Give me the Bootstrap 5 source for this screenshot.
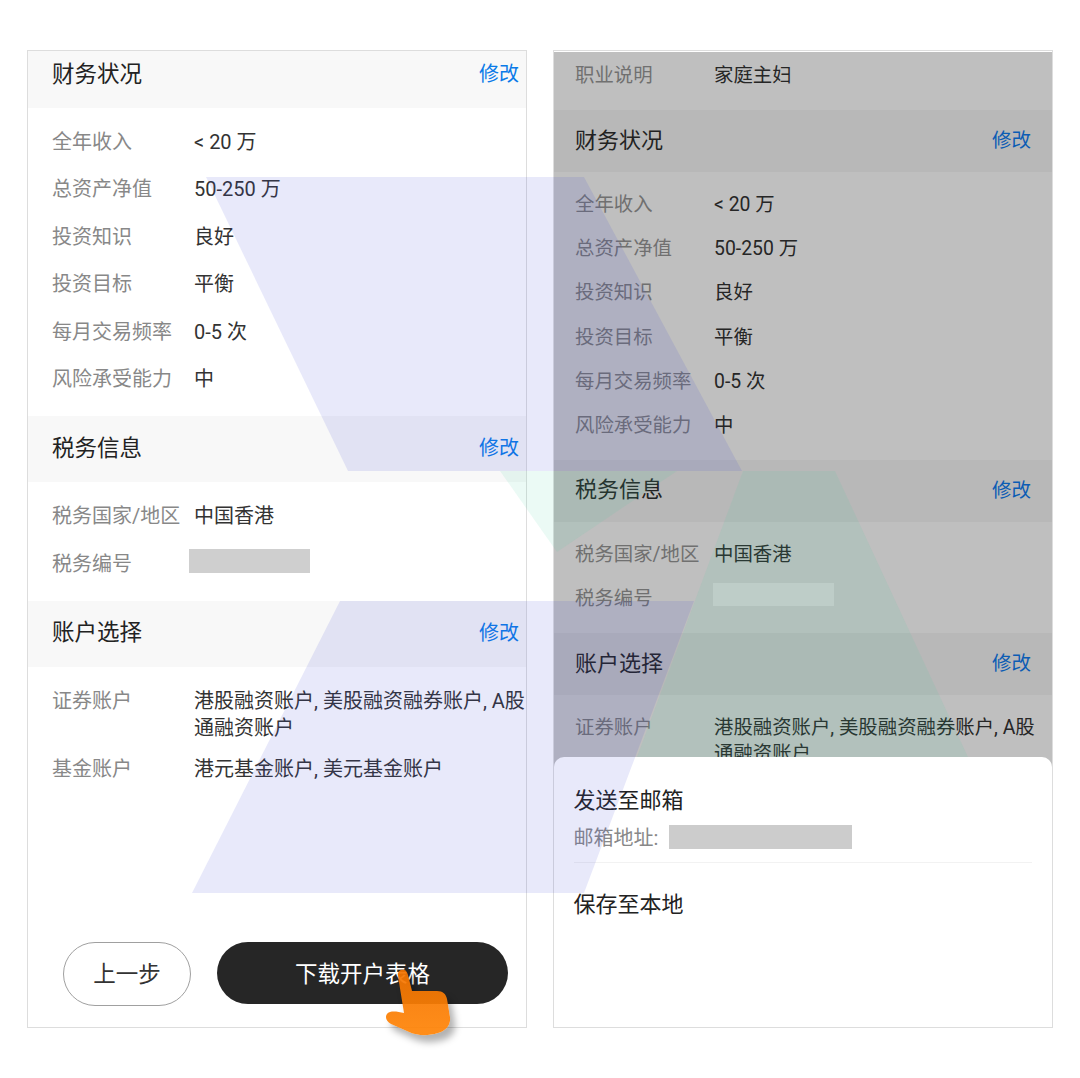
<!DOCTYPE html>
<html lang="zh">
<head>
<meta charset="utf-8">
<title>开户表格</title>
<link href="https://cdn.jsdelivr.net/npm/bootstrap@5.3.0/dist/css/bootstrap.min.css" rel="stylesheet">
<style>
html,body{height:1078px;overflow:hidden;background:#fff}
body{font-family:Roboto,"Noto Sans CJK SC",sans-serif;color:#333;position:relative}
.stage{padding:50px 0 0 27px;gap:26px}
.phone{width:500px;height:978px;border:1px solid #ddd;background:#fff;position:relative;overflow:hidden}
.sec-head{height:66px;padding:0 7px 2px 24px;background:#f8f8f8;font-size:22.5px;color:#222}
.sec-head.clipped{height:57px;padding-bottom:11px}
.sec-head.clipped span{padding-top:2px}
.sec-head a{font-size:20px;color:#0a7be8;text-decoration:none}
.info{padding:20.5px 0 23px 24px;gap:20.6px;font-size:20px;line-height:27px}
.info.tight{padding-top:21.5px;gap:13.5px}
.lab{width:142px;flex:none;color:#888}
.val{color:#333;white-space:nowrap}
.mask-l{width:121px;height:24px;margin:-2px 0 0 -5px;background:#cfcfcf}
.foot{padding:0 0 21px 35px;gap:26px}
.btn.back{width:128px;height:64px;border:1px solid #a0a0a0;color:#333;font-size:22.5px;background:#fff;padding:2px 0 0}
.btn.dl{width:291px;height:62px;border:0;background:#262626;color:#fff;font-size:22.5px;padding:3px 0 0}
.dim{background:#bfbfbf;height:720px;margin-top:1px;overflow:hidden;font-size:19.4px}
.dim .sec-head{height:62px;padding:0 21px 2px 21px;background:#b8b8b8;font-size:22px}
.dim .sec-head a{font-size:19.5px;color:#0c5cb4;padding-top:1px}
.dim .info{padding:20px 0 21px 21px;gap:18.2px;font-size:19.4px;line-height:26px}
.dim .lab{width:139px;color:#707070}
.dim .val{color:#262626}
.top-row{height:58px;padding:11px 0 0 21px;line-height:26px}
.mask-r{width:121px;height:23px;margin:-3px 0 0 -1.5px;background:#cdcdcd}
.sheet{position:absolute;left:0;right:0;bottom:0;height:270px;background:#fff;border-radius:10px 10px 0 0;padding:28px 20px 0 19.5px}
.sheet-title{font-size:22px;line-height:32px;color:#222}
.sheet-sub{font-size:20px;line-height:26px;color:#888;margin-top:8px;padding-bottom:11px;border-bottom:1px solid #f2f2f2}
.mask-m{width:183px;height:24px;background:#ccc;margin-left:11px}
.sheet-save{margin-top:26px}
.deco,.hand{position:absolute;left:0;top:0;pointer-events:none}
</style>
</head>
<body>
<div class="stage d-flex">
  <div class="phone d-flex flex-column">
    <div class="sec-head clipped d-flex justify-content-between align-items-center"><span>财务状况</span><a href="#">修改</a></div>
    <div class="info d-flex flex-column">
      <div class="d-flex"><span class="lab">全年收入</span><span class="val">&lt; 20 万</span></div>
      <div class="d-flex"><span class="lab">总资产净值</span><span class="val">50-250 万</span></div>
      <div class="d-flex"><span class="lab">投资知识</span><span class="val">良好</span></div>
      <div class="d-flex"><span class="lab">投资目标</span><span class="val">平衡</span></div>
      <div class="d-flex"><span class="lab">每月交易频率</span><span class="val">0-5 次</span></div>
      <div class="d-flex"><span class="lab">风险承受能力</span><span class="val">中</span></div>
    </div>
    <div class="sec-head d-flex justify-content-between align-items-center"><span>税务信息</span><a href="#">修改</a></div>
    <div class="info d-flex flex-column">
      <div class="d-flex"><span class="lab">税务国家/地区</span><span class="val">中国香港</span></div>
      <div class="d-flex"><span class="lab">税务编号</span><span class="mask-l"></span></div>
    </div>
    <div class="sec-head d-flex justify-content-between align-items-center"><span>账户选择</span><a href="#">修改</a></div>
    <div class="info tight d-flex flex-column">
      <div class="d-flex"><span class="lab">证券账户</span><span class="val">港股融资账户, 美股融资融券账户, A股<br>通融资账户</span></div>
      <div class="d-flex"><span class="lab">基金账户</span><span class="val">港元基金账户, 美元基金账户</span></div>
    </div>
    <div class="foot d-flex align-items-start mt-auto">
      <button type="button" class="btn back rounded-pill">上一步</button>
      <button type="button" class="btn dl rounded-pill">下载开户表格</button>
    </div>
  </div>
  <div class="phone">
    <div class="dim">
      <div class="top-row d-flex"><span class="lab">职业说明</span><span class="val">家庭主妇</span></div>
      <div class="sec-head d-flex justify-content-between align-items-center"><span>财务状况</span><a href="#">修改</a></div>
      <div class="info d-flex flex-column">
        <div class="d-flex"><span class="lab">全年收入</span><span class="val">&lt; 20 万</span></div>
        <div class="d-flex"><span class="lab">总资产净值</span><span class="val">50-250 万</span></div>
        <div class="d-flex"><span class="lab">投资知识</span><span class="val">良好</span></div>
        <div class="d-flex"><span class="lab">投资目标</span><span class="val">平衡</span></div>
        <div class="d-flex"><span class="lab">每月交易频率</span><span class="val">0-5 次</span></div>
        <div class="d-flex"><span class="lab">风险承受能力</span><span class="val">中</span></div>
      </div>
      <div class="sec-head d-flex justify-content-between align-items-center"><span>税务信息</span><a href="#">修改</a></div>
      <div class="info d-flex flex-column">
        <div class="d-flex"><span class="lab">税务国家/地区</span><span class="val">中国香港</span></div>
        <div class="d-flex"><span class="lab">税务编号</span><span class="mask-r"></span></div>
      </div>
      <div class="sec-head d-flex justify-content-between align-items-center"><span>账户选择</span><a href="#">修改</a></div>
      <div class="info d-flex flex-column">
        <div class="d-flex"><span class="lab">证券账户</span><span class="val">港股融资账户, 美股融资融券账户, A股<br>通融资账户</span></div>
      </div>
    </div>
    <div class="sheet">
      <div class="sheet-title">发送至邮箱</div>
      <div class="sheet-sub d-flex"><span>邮箱地址:</span><span class="mask-m"></span></div>
      <div class="sheet-title sheet-save">保存至本地</div>
    </div>
  </div>
</div>
<svg class="deco" width="1080" height="1078" viewBox="0 0 1080 1078" aria-hidden="true">
  <polygon fill="#46d2a0" fill-opacity=".11" points="500,471 557,552 677,471"/>
  <polygon fill="#46d2a0" fill-opacity=".11" points="743,471 835,471 968,757 637,757"/>
  <polygon fill="#3f46d7" fill-opacity=".12" points="206,177 584,177 742,471 348,471"/>
  <polygon fill="#3f46d7" fill-opacity=".12" points="340,601 694,601 584,893 192,893"/>
</svg>
<svg class="hand" width="1080" height="1078" viewBox="0 0 1080 1078" aria-hidden="true">
  <defs>
    <linearGradient id="hg" x1="0" y1="0" x2="0" y2="1"><stop offset="0" stop-color="#f47400"/><stop offset="1" stop-color="#ff8508"/></linearGradient>
    <filter id="hs" x="-30%" y="-30%" width="170%" height="170%"><feGaussianBlur stdDeviation="3.5"/></filter>
    <path id="hp" d="M398 976C397 971 401 969 404 970C406 970 407 972 408 975L412 991H437C443 991 446 994 447 999L450 1017C451 1025 446 1031 438 1033C428 1036 418 1036 409 1032L391 1024C385 1021 384 1014 390 1012C394 1011 399 1012 404 1013Z"/>
    <mask id="hm" maskUnits="userSpaceOnUse" x="0" y="0" width="1080" height="1078"><rect width="1080" height="1078" fill="#fff"/><use href="#hp" fill="#000"/></mask>
  </defs>
  <g mask="url(#hm)"><use href="#hp" transform="translate(5 7)" fill="#000" fill-opacity=".3" filter="url(#hs)"/></g>
  <use href="#hp" fill="url(#hg)" fill-opacity=".93"/>
</svg>
<script src="https://cdn.jsdelivr.net/npm/bootstrap@5.3.0/dist/js/bootstrap.bundle.min.js"></script>
</body>
</html>
